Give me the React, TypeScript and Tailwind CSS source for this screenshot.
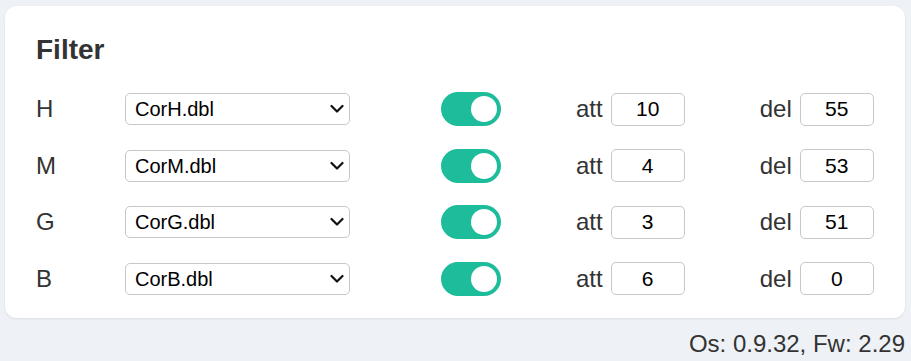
import React from "react";

const rows = [
  { name: "H", file: "CorH.dbl", att: "10", del: "55" },
  { name: "M", file: "CorM.dbl", att: "4", del: "53" },
  { name: "G", file: "CorG.dbl", att: "3", del: "51" },
  { name: "B", file: "CorB.dbl", att: "6", del: "0" },
];

function Toggle() {
  return (
    <div className="relative w-[60px] h-[34px] rounded-[34px] bg-[#1dbc9b] shrink-0">
      <div className="absolute right-[4px] top-[4px] w-[26px] h-[26px] rounded-full bg-white" />
    </div>
  );
}

function FileSelect({ value }: { value: string }) {
  return (
    <div className="relative w-[225px] h-[32px] shrink-0">
      <select
        defaultValue={value}
        className="block appearance-none w-full h-full rounded-[5px] border border-[#c8c8c8] bg-white pl-[9px] text-[20px] leading-[30px] text-black outline-none"
      >
        <option>{value}</option>
      </select>
      {/* chevron */}
      <svg
        className="absolute right-[6px] top-[11px] pointer-events-none"
        width="14"
        height="10"
        viewBox="0 0 14 10"
        fill="none"
      >
        <path d="M1.5 2L7 7.5L12.5 2" stroke="#111" strokeWidth="2.2" strokeLinecap="round" strokeLinejoin="round" />
      </svg>
    </div>
  );
}

function NumberBox({ value }: { value: string }) {
  return (
    <input
      defaultValue={value}
      className="block w-[74px] h-[33px] rounded-[5px] border border-[#c8c8c8] bg-white text-center text-[21px] text-black outline-none shrink-0"
    />
  );
}

export default function App() {
  return (
    <div
      className="min-h-screen bg-[#eef2f6] pl-[5px] pr-[6px] pt-[6px] text-[#333]"
      style={{ fontFamily: '"Liberation Sans", Arial, sans-serif' }}
    >
      <div className="bg-white rounded-[12px] shadow-[0_1px_3px_rgba(0,0,0,0.08)] px-[31px] pt-[28px] pb-[22px]">
        <h2 className="text-[28px] font-bold leading-[32px] text-[#333]">Filter</h2>

        <div className="mt-[26px] flex flex-col gap-[22.6px]">
          {rows.map((r) => (
            <div key={r.name} className="flex items-center h-[34px] text-[24px]">
              <div className="w-[89px] shrink-0">{r.name}</div>
              <FileSelect value={r.file} />
              <div className="ml-[91px]">
                <Toggle />
              </div>
              <div className="ml-[75px] flex items-center gap-[8px]">
                <span>att</span>
                <NumberBox value={r.att} />
              </div>
              <div className="ml-[75px] flex items-center gap-[8px]">
                <span>del</span>
                <NumberBox value={r.del} />
              </div>
            </div>
          ))}
        </div>
      </div>

      <div className="mt-[12px] text-right text-[24px] leading-[28px]">Os: 0.9.32, Fw: 2.29</div>
    </div>
  );
}
